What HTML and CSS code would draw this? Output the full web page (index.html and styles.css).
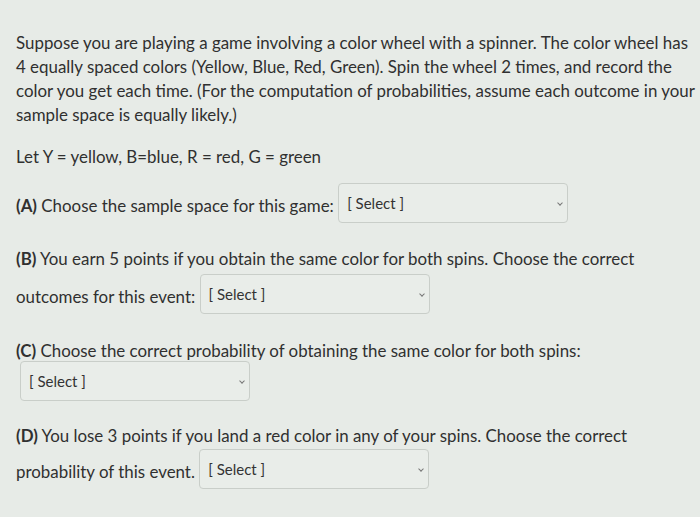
FILE: index.html
```html
<!DOCTYPE html>
<html>
<head>
<meta charset="utf-8">
<link rel="stylesheet" href="styles.css">
</head>
<body>
<div class="page">
  <p class="intro">Suppose you are playing a game involving a color wheel with a spinner. The color wheel has 4 equally spaced colors (Yellow, Blue, Red, Green). Spin the wheel 2 times, and record the color you get each time. (For the computation of probabilities, assume each outcome in your sample space is equally likely.)</p>
  <p class="let">Let Y = yellow, B=blue, R = red, G = green</p>
  <p class="q qa"><b>(A)</b> Choose the sample space for this game: <span class="select">[ Select ]<span class="chev"></span></span></p>
  <p class="q qb"><b>(B)</b> You earn 5 points if you obtain the same color for both spins. Choose the correct outcomes for this event: <span class="select">[ Select ]<span class="chev"></span></span></p>
  <p class="q qc"><b>(C)</b> Choose the correct probability of obtaining the same color for both spins:</p>
  <div class="cwrap"><span class="select">[ Select ]<span class="chev"></span></span></div>
  <p class="q qd"><b>(D)</b> You lose 3 points if you land a red color in any of your spins. Choose the correct probability of this event. <span class="select">[ Select ]<span class="chev"></span></span></p>
</div>
</body>
</html>
```
FILE: styles.css
```css
html, body {
  margin: 0;
  padding: 0;
}
body {
  background: #e7ebe7;
  color: #303030;
  font-family: Lato, "Open Sans", sans-serif;
  font-size: 16.9px;
  width: 700px;
  height: 517px;
  overflow: hidden;
}
.page {
  padding: 31px 8px 0 16px;
}
p {
  margin: 0;
}
b {
  font-weight: 700;
}
.intro {
  line-height: 24px;
  width: 684px;
}
.let {
  margin-top: 18px;
  line-height: 24px;
}
.q {
  line-height: 30px;
  width: 640px;
}
.qa {
  margin-top: 14px;
}
.qb {
  margin-top: 21px;
}
.qc {
  margin-top: 27px;
  line-height: 20px;
}
.qd {
  margin-top: 21px;
  line-height: 27px;
}
.cwrap {
  display: flex;
  padding-left: 4px;
}
.select {
  display: inline-flex;
  align-items: center;
  position: relative;
  box-sizing: border-box;
  width: 230px;
  height: 40px;
  padding: 0 0 0 8px;
  border: 1px solid #c9cec9;
  border-radius: 4px;
  background: #e9ede9;
  font-size: 15px;
  line-height: 20px;
  vertical-align: 3px;
  color: #333;
}
.chev {
  position: absolute;
  right: 5px;
  top: 17px;
  width: 3px;
  height: 3px;
  border-right: 1px solid #777;
  border-bottom: 1px solid #777;
  transform: rotate(45deg);
}
```
